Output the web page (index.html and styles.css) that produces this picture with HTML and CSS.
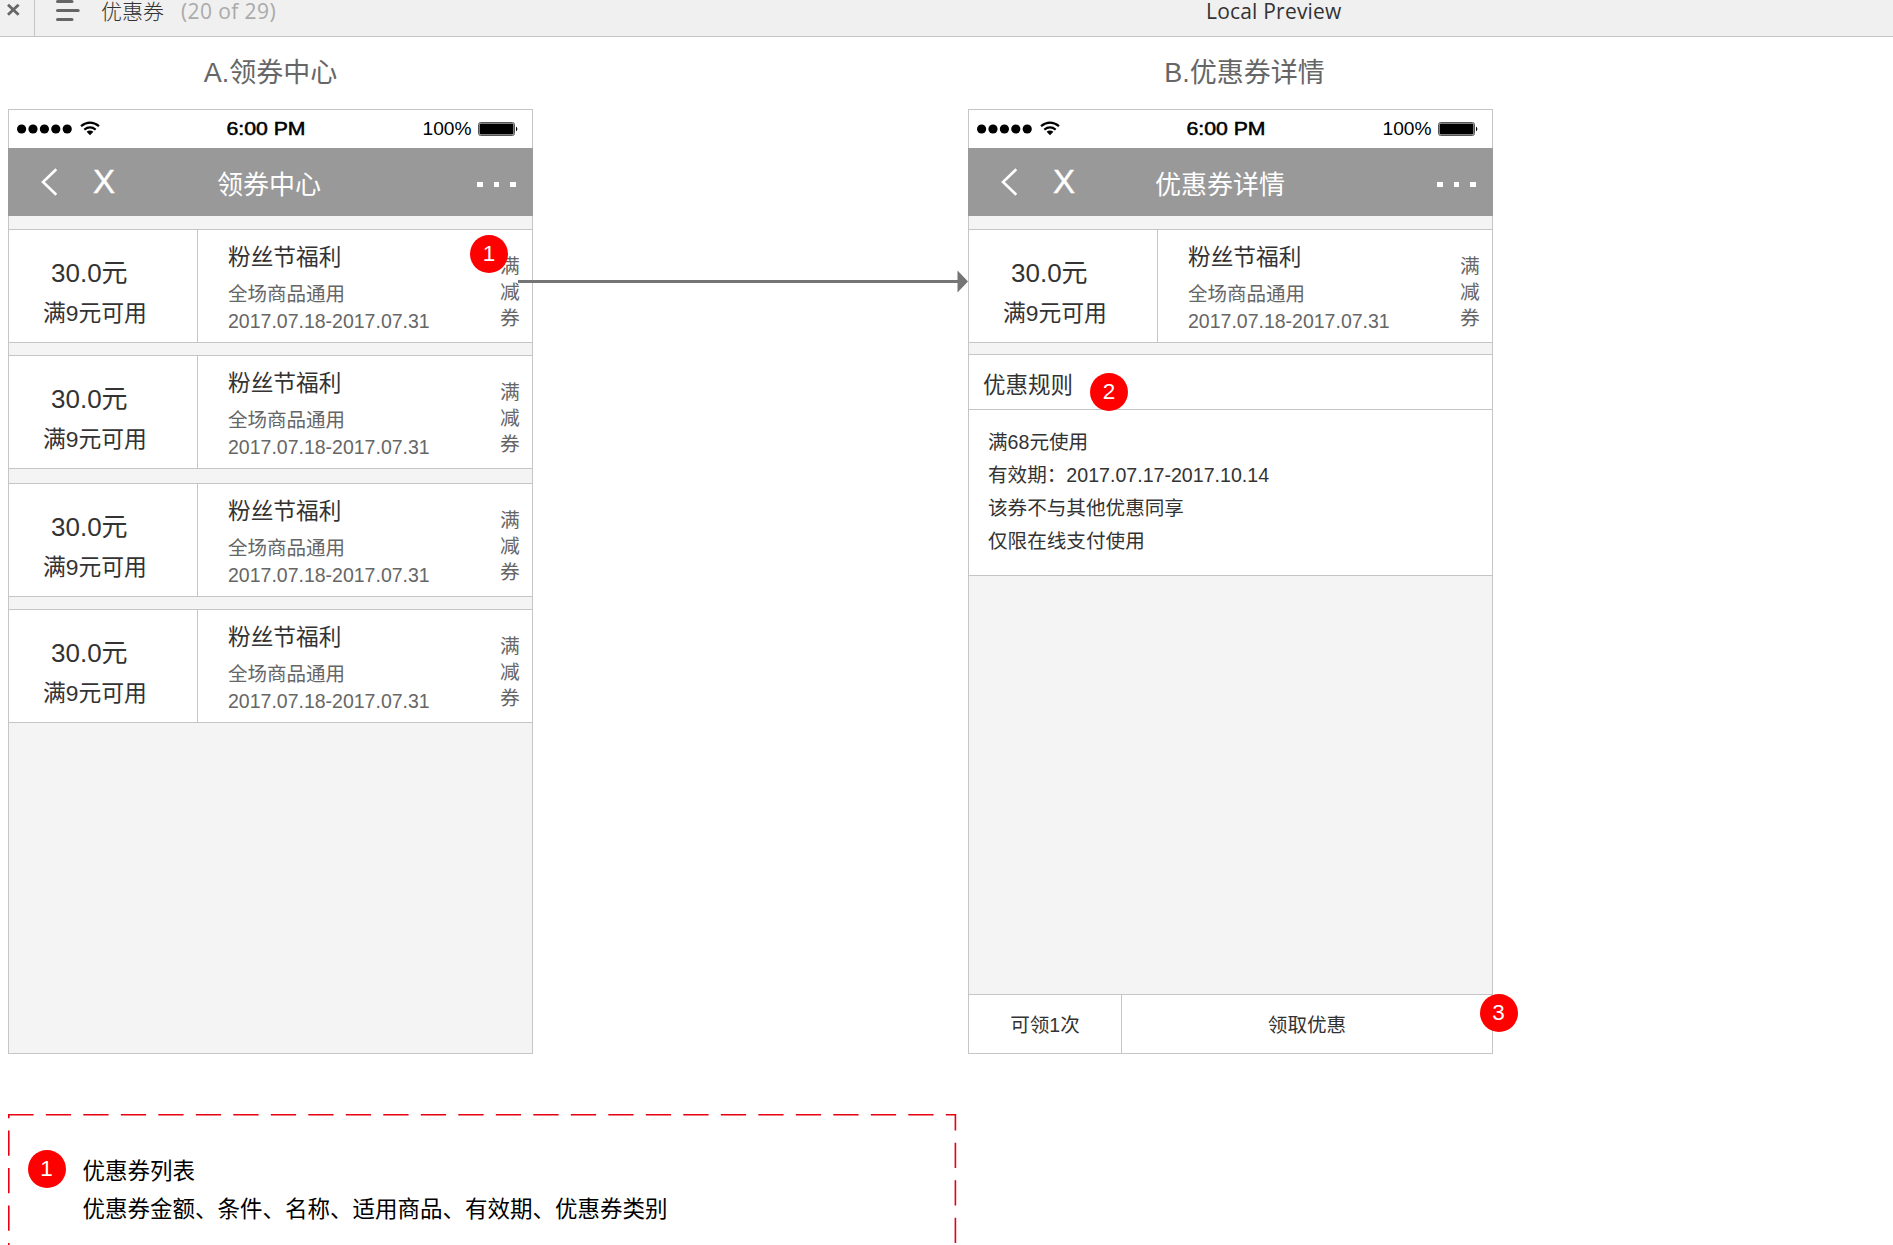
FILE: index.html
```
<!DOCTYPE html>
<html lang="zh-CN">
<head>
    <meta charset="UTF-8">
    <title>优惠券</title>
    <link rel="stylesheet" href="styles.css">
</head>
<body>
    <div class="topbar">
        <div class="close">
            <svg width="34" height="36" viewBox="0 0 34 36"><path d="M8 4.8L18.6 14.8M18.6 4.8L8 14.8" stroke="#666" stroke-width="2.8"/></svg>
        </div>
        <svg class="burger" width="26" height="36" viewBox="0 0 26 36">
            <path d="M2.5 1.5H17M2.5 10.4H23.2M2.5 19.6H17" stroke="#666" stroke-width="3" stroke-linecap="round"/>
        </svg>
        <span class="page-name">优惠券</span>
        <span class="page-count">(20 of 29)</span>
        <span class="preview">Local Preview</span>
    </div>

    <div class="boards">
        <div class="board">
            <h2 class="board-title">A.领券中心</h2>
            <div class="phone">
                <svg class="status" width="523" height="38" viewBox="0 0 523 38">
                    <circle cx="12.6" cy="19" r="4.6"/>
                    <circle cx="24" cy="19" r="4.6"/>
                    <circle cx="35.4" cy="19" r="4.6"/>
                    <circle cx="46.8" cy="19" r="4.6"/>
                    <circle cx="58.2" cy="19" r="4.6"/>
                    <g fill="none" stroke="#000" stroke-width="2.2">
                        <path d="M72 16.2Q81 9.2 90 16.2"/>
                        <path d="M75.3 19.6Q81 15.2 86.7 19.6"/>
                    </g>
                    <path d="M77.6 21.8Q81 19.4 84.4 21.8L81 25.2Z"/>
                    <text class="clock" x="217.5" y="25" textLength="79" lengthAdjust="spacingAndGlyphs">6:00 PM</text>
                    <text x="413.5" y="25" textLength="49" lengthAdjust="spacingAndGlyphs">100%</text>
                    <rect x="469.5" y="12.5" width="36" height="13" rx="2" fill="#fff" stroke="#555"/>
                    <rect x="470.5" y="13.5" width="34" height="11" rx="1"/>
                    <path d="M507 16.5Q509.8 19 507 21.5Z"/>
                </svg>
                <div class="nav">
                    <svg class="back" width="18" height="28" viewBox="0 0 18 28"><path d="M16.3 1.2L3 14L16.3 26.8" fill="none" stroke="#fff" stroke-width="2.6"/></svg>
                    <span class="nav-close">X</span>
                    <span class="nav-title">领券中心</span>
                    <div class="more"><i></i><i></i><i></i></div>
                </div>
                <div class="coupon">
                    <div class="amount">
                        <div class="price">30.0元</div>
                        <div class="limit">满9元可用</div>
                    </div>
                    <div class="info">
                        <div class="name">粉丝节福利</div>
                        <div class="sub">全场商品通用</div>
                        <div class="sub">2017.07.18-2017.07.31</div>
                    </div>
                    <div class="tag">满减券</div>
                    <span class="badge badge-1">1</span>
                </div>
                <div class="coupon">
                    <div class="amount">
                        <div class="price">30.0元</div>
                        <div class="limit">满9元可用</div>
                    </div>
                    <div class="info">
                        <div class="name">粉丝节福利</div>
                        <div class="sub">全场商品通用</div>
                        <div class="sub">2017.07.18-2017.07.31</div>
                    </div>
                    <div class="tag">满减券</div>
                </div>
                <div class="coupon spaced">
                    <div class="amount">
                        <div class="price">30.0元</div>
                        <div class="limit">满9元可用</div>
                    </div>
                    <div class="info">
                        <div class="name">粉丝节福利</div>
                        <div class="sub">全场商品通用</div>
                        <div class="sub">2017.07.18-2017.07.31</div>
                    </div>
                    <div class="tag">满减券</div>
                </div>
                <div class="coupon">
                    <div class="amount">
                        <div class="price">30.0元</div>
                        <div class="limit">满9元可用</div>
                    </div>
                    <div class="info">
                        <div class="name">粉丝节福利</div>
                        <div class="sub">全场商品通用</div>
                        <div class="sub">2017.07.18-2017.07.31</div>
                    </div>
                    <div class="tag">满减券</div>
                </div>
                <svg class="arrow" width="450" height="24" viewBox="0 0 450 24">
                    <path d="M0 11.5H442" stroke="#757575" stroke-width="3"/>
                    <path d="M439.5 0.5L450 11.5L439.5 22.5Z" fill="#757575"/>
                </svg>
            </div>
        </div>

        <div class="board">
            <h2 class="board-title detail">B.优惠券详情</h2>
            <div class="phone">
                <svg class="status" width="523" height="38" viewBox="0 0 523 38">
                    <circle cx="12.6" cy="19" r="4.6"/>
                    <circle cx="24" cy="19" r="4.6"/>
                    <circle cx="35.4" cy="19" r="4.6"/>
                    <circle cx="46.8" cy="19" r="4.6"/>
                    <circle cx="58.2" cy="19" r="4.6"/>
                    <g fill="none" stroke="#000" stroke-width="2.2">
                        <path d="M72 16.2Q81 9.2 90 16.2"/>
                        <path d="M75.3 19.6Q81 15.2 86.7 19.6"/>
                    </g>
                    <path d="M77.6 21.8Q81 19.4 84.4 21.8L81 25.2Z"/>
                    <text class="clock" x="217.5" y="25" textLength="79" lengthAdjust="spacingAndGlyphs">6:00 PM</text>
                    <text x="413.5" y="25" textLength="49" lengthAdjust="spacingAndGlyphs">100%</text>
                    <rect x="469.5" y="12.5" width="36" height="13" rx="2" fill="#fff" stroke="#555"/>
                    <rect x="470.5" y="13.5" width="34" height="11" rx="1"/>
                    <path d="M507 16.5Q509.8 19 507 21.5Z"/>
                </svg>
                <div class="nav">
                    <svg class="back" width="18" height="28" viewBox="0 0 18 28"><path d="M16.3 1.2L3 14L16.3 26.8" fill="none" stroke="#fff" stroke-width="2.6"/></svg>
                    <span class="nav-close">X</span>
                    <span class="nav-title detail">优惠券详情</span>
                    <div class="more"><i></i><i></i><i></i></div>
                </div>
                <div class="coupon">
                    <div class="amount">
                        <div class="price">30.0元</div>
                        <div class="limit">满9元可用</div>
                    </div>
                    <div class="info">
                        <div class="name">粉丝节福利</div>
                        <div class="sub">全场商品通用</div>
                        <div class="sub">2017.07.18-2017.07.31</div>
                    </div>
                    <div class="tag">满减券</div>
                </div>
                <div class="rules">
                    <div class="rules-head">优惠规则<span class="badge badge-2">2</span></div>
                    <div class="rules-body">
                        <p>满68元使用</p>
                        <p>有效期：2017.07.17-2017.10.14</p>
                        <p>该券不与其他优惠同享</p>
                        <p>仅限在线支付使用</p>
                    </div>
                </div>
                <div class="actions">
                    <div class="times">可领1次</div>
                    <div class="get">领取优惠</div>
                    <span class="badge badge-3">3</span>
                </div>
            </div>
        </div>
    </div>

    <div class="notes">
        <svg class="dashes" width="950" height="131" viewBox="0 0 950 131">
            <g fill="none" stroke="#e60012" stroke-width="1.6" stroke-dasharray="25.3 12.2">
                <path d="M0.3 0.8H947.4V131"/>
                <path d="M0.8 0V131" stroke-dashoffset="21"/>
            </g>
        </svg>
        <span class="badge">1</span>
        <div class="notes-text">
            <p>优惠券列表</p>
            <p>优惠券金额、条件、名称、适用商品、有效期、优惠券类别</p>
        </div>
    </div>
</body>
</html>
```
FILE: styles.css
```
* {
    box-sizing: border-box;
}
body {
    margin: 0;
    height: 1245px;
    overflow: hidden;
    background-color: #fff;
    color: #333;
    font-family: "Liberation Sans", "Noto Sans CJK SC", sans-serif;
}
svg {
    display: block;
}
p {
    margin: 0;
}

/* preview toolbar */
.topbar {
    display: flex;
    height: 37px;
    background-color: #f0f0f0;
    border-bottom: 1px solid #c4c4c4;
    font-family: "Open Sans", "Noto Sans CJK SC", sans-serif;
    font-size: 21px;
    line-height: 22px;
    white-space: nowrap;
}
.close {
    width: 35px;
    border-right: 1px solid #c4c4c4;
}
.burger {
    margin-left: 20px;
}
.page-name {
    width: 80px;
    margin-left: 20px;
    font-weight: 300;
}
.page-count {
    width: 1025px;
    color: #aaa;
    letter-spacing: 0.4px;
}
.preview {
    letter-spacing: 0.2px;
}

/* boards */
.boards {
    display: flex;
    gap: 435px;
    padding-left: 8px;
}
.board {
    width: 525px;
}
.board-title {
    margin: 0;
    height: 72px;
    line-height: 72px;
    font-size: 27px;
    font-weight: 400;
    text-align: center;
    color: #666;
}
.board-title.detail {
    padding-left: 28px;
}
.phone {
    position: relative;
    display: flex;
    flex-direction: column;
    height: 945px;
    border: 1px solid #c5c5c5;
    background-color: #f4f4f4;
}
.status {
    flex: none;
    background-color: #fff;
    font-size: 17.5px;
}
.clock {
    stroke: #000;
    stroke-width: 0.5px;
}
.nav {
    display: flex;
    flex: none;
    align-items: center;
    height: 68px;
    margin: 0 -1px;
    padding: 0 17px 0 32px;
    background-color: #999;
    color: #fff;
}
.nav-close {
    width: 100px;
    margin-left: 35px;
    font-size: 33px;
    line-height: 68px;
    -webkit-text-stroke: 0.4px #fff;
}
.nav-title {
    width: 252px;
    margin-left: 24px;
    padding-top: 7px;
    font-size: 26px;
    line-height: 61px;
}
.nav-title.detail {
    margin-left: 2px;
    width: 274px;
}
.more {
    display: flex;
    gap: 11px;
    margin-left: 8px;
    padding-top: 4px;
}
.more i {
    width: 5.5px;
    height: 5px;
    background-color: #fff;
}

/* coupon card */
.coupon {
    position: relative;
    display: flex;
    flex: none;
    height: 114px;
    margin-top: 12px;
    background-color: #fff;
    border-top: 1px solid #c5c5c5;
    border-bottom: 1px solid #c5c5c5;
}
.nav + .coupon {
    margin-top: 13px;
}
.coupon.spaced {
    margin-top: 14px;
}
.amount {
    width: 189px;
    padding: 23px 0 0 34px;
    border-right: 1px solid #c5c5c5;
    line-height: 40px;
}
.price {
    padding-left: 8px;
    font-size: 26px;
}
.limit {
    font-size: 22.8px;
}
.info {
    flex: 1;
    padding: 11px 0 0 30px;
}
.name {
    margin-bottom: 8px;
    font-size: 22.7px;
    line-height: 32px;
}
.sub {
    font-size: 19.5px;
    line-height: 27px;
    color: #666;
}
.tag {
    width: 20px;
    margin: 23px 12px 0 0;
    font-size: 19.8px;
    line-height: 26px;
    color: #666;
}

/* numbered markers */
.badge {
    width: 38px;
    height: 38px;
    border-radius: 50%;
    background-color: #f00;
    color: #fff;
    font-size: 22.5px;
    line-height: 37px;
    text-align: center;
}
.badge-1 {
    position: absolute;
    left: 461px;
    top: 5px;
}
.badge-2 {
    position: absolute;
    left: 121px;
    top: 18px;
}
.badge-3 {
    position: absolute;
    left: 510.5px;
    top: -1px;
}
.arrow {
    position: absolute;
    left: 509px;
    top: 160px;
}

/* coupon rules */
.rules {
    margin-top: 11px;
    background-color: #fff;
    border-top: 1px solid #c5c5c5;
    border-bottom: 1px solid #c5c5c5;
}
.rules-head {
    position: relative;
    height: 55px;
    padding-left: 14px;
    border-bottom: 1px solid #c5c5c5;
    font-size: 22.5px;
    line-height: 62px;
}
.rules-body {
    height: 165px;
    padding: 16px 0 0 19px;
    font-size: 19.6px;
    line-height: 33px;
}
.actions {
    position: relative;
    display: flex;
    height: 59px;
    margin-top: auto;
    background-color: #fff;
    border-top: 1px solid #c5c5c5;
    font-size: 19.6px;
    line-height: 60px;
    text-align: center;
}
.times {
    width: 153px;
    border-right: 1px solid #c5c5c5;
}
.get {
    flex: 1;
}

/* notes */
.notes {
    position: relative;
    display: flex;
    height: 131px;
    margin: 60px 0 0 8px;
    padding: 36px 0 0 19.5px;
    color: #000;
}
.dashes {
    position: absolute;
    left: 0;
    top: 0;
}
.notes-text {
    margin-left: 17px;
    padding-top: 3px;
    font-size: 22.5px;
    line-height: 38px;
}
```
